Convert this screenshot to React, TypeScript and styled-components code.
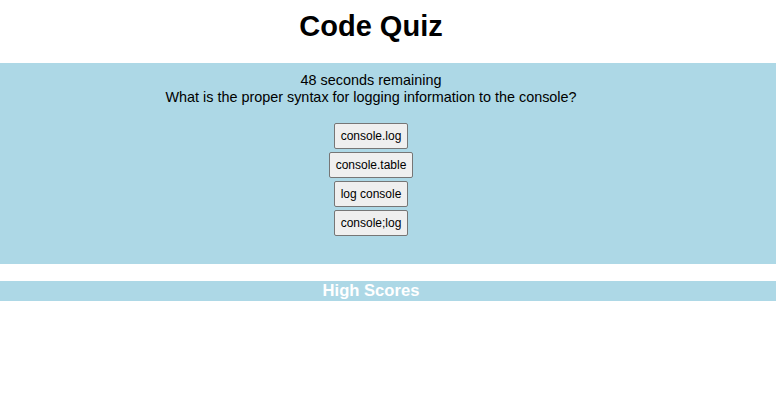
import React from "react";
import styled, { createGlobalStyle } from "styled-components";

const Global = createGlobalStyle`
  html, body { margin: 0; padding: 0; background: #fff; }
  body { font-family: "Liberation Sans", Arial, sans-serif; color: #000; }
`;

const Page = styled.div`
  display: flex;
  flex-direction: column;
`;

const Title = styled.h1`
  margin: 0;
  padding: 7px 34px 0 0;
  height: 63px;
  box-sizing: border-box;
  text-align: center;
  font-size: 29px;
  font-weight: bold;
  line-height: 38px;
`;

const Band = styled.section`
  background: #add8e6;
  padding: 9px 34px 28px 0;
  display: flex;
  flex-direction: column;
  align-items: center;
  text-align: center;
`;

const Line = styled.div`
  font-size: 14.4px;
  line-height: 17px;
`;

const Choices = styled.div`
  display: flex;
  flex-direction: column;
  align-items: center;
  gap: 3px;
  margin-top: 17px;
`;

const Choice = styled.button`
  font-family: "Liberation Sans", Arial, sans-serif;
  font-size: 12px;
  height: 26px;
  padding: 0 6px;
  background: #efefef;
  color: #000;
  border: 1px solid #767676;
  border-radius: 2px;
  cursor: pointer;
`;

const Scores = styled.h2`
  margin: 17px 0 0;
  background: #add8e6;
  color: #fff;
  font-size: 16.6px;
  font-weight: bold;
  line-height: 20px;
  height: 20px;
  text-align: center;
  padding-right: 34px;
`;

export default function App() {
  const choices = ["console.log", "console.table", "log console", "console;log"];
  return (
    <Page>
      <Global />
      <Title>Code Quiz</Title>
      <Band>
        <Line>48 seconds remaining</Line>
        <Line>What is the proper syntax for logging information to the console?</Line>
        <Choices>
          {choices.map((c) => (
            <Choice key={c}>{c}</Choice>
          ))}
        </Choices>
      </Band>
      <Scores>High Scores</Scores>
    </Page>
  );
}
